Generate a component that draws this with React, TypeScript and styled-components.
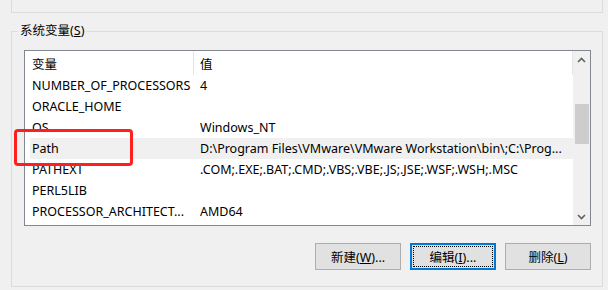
import styled, { createGlobalStyle } from "styled-components";

const GlobalStyle = createGlobalStyle`
  html, body {
    margin: 0;
    padding: 0;
    background: #f0f0f0;
  }
  body {
    font-family: "Noto Sans", "Noto Sans CJK SC", sans-serif;
    font-size: 12.5px;
    color: #000;
  }
`;

type Variable = { name: string; value: string };

const variables: Variable[] = [
  { name: "NUMBER_OF_PROCESSORS", value: "4" },
  { name: "ORACLE_HOME", value: "" },
  { name: "OS", value: "Windows_NT" },
  {
    name: "Path",
    value: "D:\\Program Files\\VMware\\VMware Workstation\\bin\\;C:\\Prog...",
  },
  { name: "PATHEXT", value: ".COM;.EXE;.BAT;.CMD;.VBS;.VBE;.JS;.JSE;.WSF;.WSH;.MSC" },
  { name: "PERL5LIB", value: "" },
  { name: "PROCESSOR_ARCHITECT...", value: "AMD64" },
];

const SELECTED = "Path";

function Chevron({ up }: { up?: boolean }) {
  return (
    <svg width="9" height="6" viewBox="0 0 9 6">
      <path
        d={up ? "M1 5 L4.5 1.5 L8 5" : "M1 1 L4.5 4.5 L8 1"}
        fill="none"
        stroke="#606060"
        strokeWidth="1.6"
      />
    </svg>
  );
}

export default function App() {
  return (
    <>
      <GlobalStyle />
      <Page>
        <UserGroup />
        <Group>
          <Legend>
            系统变量(<u>S</u>)
          </Legend>
          <ListBox>
            <ListArea>
              <Header>
                <HeaderCell>变量</HeaderCell>
                <HeaderCell>值</HeaderCell>
              </Header>
              {variables.map((v) => (
                <Row key={v.name} $selected={v.name === SELECTED}>
                  <NameCell>{v.name}</NameCell>
                  <ValueCell>{v.value}</ValueCell>
                </Row>
              ))}
            </ListArea>
            <ScrollBar>
              <ArrowButton>
                <Chevron up />
              </ArrowButton>
              <Track>
                <Thumb />
              </Track>
              <ArrowButton>
                <Chevron />
              </ArrowButton>
            </ScrollBar>
          </ListBox>
          <ButtonRow>
            <Button>
              新建(<u>W</u>)...
            </Button>
            <Button $focused>
              编辑(<u>I</u>)...
            </Button>
            <Button>
              删除(<u>L</u>)
            </Button>
          </ButtonRow>
        </Group>
        <Highlight />
      </Page>
    </>
  );
}

const Page = styled.div`
  position: relative;
  width: 608px;
  height: 290px;
  overflow: hidden;
`;

const UserGroup = styled.div`
  margin-left: 11px;
  width: 590px;
  height: 12px;
  border: 1px solid #dcdcdc;
  border-top: none;
`;

const Group = styled.fieldset`
  margin: 10px 0 0 11px;
  padding: 0 0 16px;
  width: 592px;
  box-sizing: border-box;
  border: 1px solid #dcdcdc;
  min-inline-size: 0;
`;

const Legend = styled.legend`
  margin-left: 6px;
  padding: 0 2px;
  font-size: 12.5px;
  line-height: 16px;
  color: #000;
`;

const ListBox = styled.div`
  display: flex;
  margin: 11px 11px 0 12px;
  height: 174px;
  border: 1px solid #828790;
  background: #fff;
`;

const ListArea = styled.div`
  flex: 1;
  min-width: 0;
`;

const Header = styled.div`
  display: grid;
  grid-template-columns: 169px 1fr;
  height: 24px;
`;

const HeaderCell = styled.div`
  display: flex;
  align-items: center;
  padding-left: 7px;
  border-right: 1px solid #e5e5e5;

  & + & {
    padding-left: 6px;
  }
`;

const Row = styled.div<{ $selected?: boolean }>`
  display: grid;
  grid-template-columns: 163px 1fr;
  align-items: center;
  height: 21px;
  margin-left: 5px;
  background: ${(p) => (p.$selected ? "#f0f0f0" : "transparent")};
`;

const NameCell = styled.div`
  padding-left: 2px;
  white-space: nowrap;
  overflow: hidden;
`;

const ValueCell = styled.div`
  padding-left: 7px;
  white-space: nowrap;
  overflow: hidden;
`;

const ScrollBar = styled.div`
  display: flex;
  flex-direction: column;
  width: 17px;
  background: #f0f0f0;
`;

const ArrowButton = styled.div`
  display: flex;
  align-items: center;
  justify-content: center;
  height: 17px;
`;

const Track = styled.div`
  flex: 1;
`;

const Thumb = styled.div`
  margin: 36px 1px 0 2px;
  height: 40px;
  background: #cdcdcd;
`;

const ButtonRow = styled.div`
  display: flex;
  justify-content: flex-end;
  gap: 9px;
  margin: 17px 11px 0 0;
`;

const Button = styled.button<{ $focused?: boolean }>`
  position: relative;
  width: 86px;
  height: 27px;
  padding: 0;
  font-family: "Noto Sans", "Noto Sans CJK SC", sans-serif;
  font-size: 12.5px;
  color: #000;
  background: #e1e1e1;
  border: ${(p) => (p.$focused ? "2px solid #0078d7" : "1px solid #adadad")};

  &::after {
    content: "";
    display: ${(p) => (p.$focused ? "block" : "none")};
    position: absolute;
    inset: 1px;
    border: 1px dotted #000;
  }
`;

const Highlight = styled.div`
  position: absolute;
  left: 14px;
  top: 129px;
  width: 119px;
  height: 37px;
  box-sizing: border-box;
  border: 3px solid #ff1f1f;
  border-radius: 4px;
`;
